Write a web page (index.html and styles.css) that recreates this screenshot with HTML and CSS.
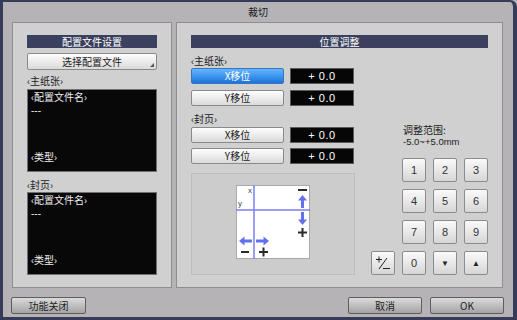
FILE: index.html
```html
<!DOCTYPE html>
<html lang="zh-CN">
<head>
    <meta charset="UTF-8">
    <title>裁切</title>
    <link rel="stylesheet" href="styles.css">
</head>
<body>
    <div class="window">
        <div class="titlebar">裁切</div>

        <div class="main">
            <!-- 配置文件设置 -->
            <section class="panel panel-profile">
                <div class="bar">配置文件设置</div>
                <button class="btn btn-select">选择配置文件</button>

                <div class="label">‹主纸张›</div>
                <div class="info-box">
                    <div class="info-name">‹配置文件名›</div>
                    <div class="info-dash">---</div>
                    <div class="info-type">‹类型›</div>
                </div>

                <div class="label label-low">‹封页›</div>
                <div class="info-box">
                    <div class="info-name">‹配置文件名›</div>
                    <div class="info-dash">---</div>
                    <div class="info-type">‹类型›</div>
                </div>
            </section>

            <!-- 位置调整 -->
            <section class="panel panel-adjust">
                <div class="bar">位置调整</div>
                <div class="adjust-body">
                    <div class="adjust-left">
                        <div class="label-a">‹主纸张›</div>
                        <div class="shift-row">
                            <button class="btn btn-shift active">X移位</button>
                            <div class="value">+ 0.0</div>
                        </div>
                        <div class="shift-row">
                            <button class="btn btn-shift">Y移位</button>
                            <div class="value">+ 0.0</div>
                        </div>

                        <div class="label-a label-a2">‹封页›</div>
                        <div class="shift-row shift-row-first">
                            <button class="btn btn-shift">X移位</button>
                            <div class="value">+ 0.0</div>
                        </div>
                        <div class="shift-row shift-row-tight">
                            <button class="btn btn-shift">Y移位</button>
                            <div class="value">+ 0.0</div>
                        </div>

                        <div class="diagram">
                            <svg width="74" height="74" viewBox="0 0 74 74">
                                <rect x="0.5" y="0.5" width="73" height="73" fill="#fff" stroke="#a9a9a9"/>
                                <line x1="18" y1="0" x2="18" y2="74" stroke="#7480f2" stroke-width="1.5"/>
                                <line x1="0" y1="25" x2="74" y2="25" stroke="#7480f2" stroke-width="1.5"/>
                                <text x="12" y="8" font-size="8" fill="#444" font-family="Liberation Sans, sans-serif">x</text>
                                <text x="2" y="21" font-size="8" fill="#444" font-family="Liberation Sans, sans-serif">y</text>
                                <!-- 右侧 -->
                                <rect x="62" y="4" width="9" height="2" fill="#2a2a2a"/>
                                <polygon points="66.5,10 71,15.5 62,15.5" fill="#6470f0"/>
                                <rect x="65" y="15" width="3" height="8" fill="#6470f0"/>
                                <rect x="65" y="27" width="3" height="8" fill="#6470f0"/>
                                <polygon points="62,34.5 71,34.5 66.5,40" fill="#6470f0"/>
                                <rect x="62" y="46.5" width="9" height="2" fill="#2a2a2a"/>
                                <rect x="65.5" y="43" width="2" height="9" fill="#2a2a2a"/>
                                <!-- 下侧 -->
                                <polygon points="3,56 8.5,51.5 8.5,60.5" fill="#6470f0"/>
                                <rect x="8" y="54.5" width="8" height="3" fill="#6470f0"/>
                                <rect x="20" y="54.5" width="8" height="3" fill="#6470f0"/>
                                <polygon points="27.5,51.5 27.5,60.5 33,56" fill="#6470f0"/>
                                <rect x="5" y="66" width="8" height="2" fill="#2a2a2a"/>
                                <rect x="23" y="66" width="9" height="2" fill="#2a2a2a"/>
                                <rect x="26.5" y="62.5" width="2" height="9" fill="#2a2a2a"/>
                            </svg>
                        </div>
                    </div>

                    <div class="adjust-right">
                        <div class="range">
                            <div class="range-title">调整范围:</div>
                            <div class="range-num">-5.0~+5.0mm</div>
                        </div>
                        <div class="keypad">
                            <button class="btn key key-start">1</button>
                            <button class="btn key">2</button>
                            <button class="btn key">3</button>
                            <button class="btn key key-start">4</button>
                            <button class="btn key">5</button>
                            <button class="btn key">6</button>
                            <button class="btn key key-start">7</button>
                            <button class="btn key">8</button>
                            <button class="btn key">9</button>
                            <button class="btn key key-sign">
                                <svg width="16" height="14" viewBox="0 0 16 14">
                                    <rect x="1" y="3" width="6" height="1" fill="#222"/>
                                    <rect x="3.5" y="0.5" width="1" height="6" fill="#222"/>
                                    <line x1="4" y1="13" x2="12" y2="2" stroke="#222" stroke-width="1"/>
                                    <rect x="8" y="12" width="7" height="1" fill="#222"/>
                                </svg>
                            </button>
                            <button class="btn key">0</button>
                            <button class="btn key key-arrow">▼</button>
                            <button class="btn key key-arrow">▲</button>
                        </div>
                    </div>
                </div>
            </section>
        </div>

        <div class="footer">
            <button class="btn btn-foot">功能关闭</button>
            <div class="footer-right">
                <button class="btn btn-foot">取消</button>
                <button class="btn btn-foot">OK</button>
            </div>
        </div>
    </div>
</body>
</html>
```

FILE: styles.css
```css
* {
    margin: 0;
    padding: 0;
    box-sizing: border-box;
}

body {
    font-family: "Noto Sans CJK SC", "Liberation Sans", sans-serif;
    font-size: 10px;
    color: #222;
    background: #b5b3b5;
    overflow: hidden;
}

.window {
    width: 517px;
    height: 320px;
    border: 3px solid #363b57;
    border-top-width: 2px;
    border-right-width: 4px;
    border-top-right-radius: 7px;
    background: #b5b3b5;
    display: flex;
    flex-direction: column;
}

.titlebar {
    height: 20px;
    line-height: 20px;
    text-align: center;
    color: #1a1a1a;
}

.main {
    height: 266px;
    display: flex;
    gap: 4px;
    padding: 0 9px;
}

.panel {
    border: 1px solid #8e8e8e;
    background: #d0d0d0;
    padding: 12px 14px 0;
}

.panel-profile {
    width: 160px;
}

.panel-adjust {
    width: 327px;
}

.bar {
    height: 13px;
    line-height: 13px;
    background: #3a405d;
    color: #fff;
    text-align: center;
}

.btn {
    font-family: inherit;
    font-size: 10px;
    color: #222;
    border: 1px solid #8a8a8a;
    border-radius: 2px;
    background: linear-gradient(#fdfdfd, #dadada);
    cursor: pointer;
}

.btn-select {
    display: block;
    width: 100%;
    height: 17px;
    margin-top: 5px;
    position: relative;
}

.btn-select::after {
    content: "";
    position: absolute;
    right: 2px;
    bottom: 2px;
    width: 0;
    height: 0;
    border-left: 4px solid transparent;
    border-bottom: 4px solid #555;
}

.label {
    height: 19px;
    padding-top: 4px;
    line-height: 14px;
    color: #222;
}

.label-low {
    height: 20px;
    padding-top: 6px;
}

.info-box {
    height: 83px;
    background: #080808;
    border: 1px solid #707070;
    color: #eee;
    padding: 0 3px 7px;
    line-height: 15px;
    display: flex;
    flex-direction: column;
}

.info-name {
    line-height: 14px;
}

.info-dash {
    font-family: "Liberation Sans", sans-serif;
    line-height: 13px;
}

.info-type {
    margin-top: auto;
}

.adjust-body {
    display: flex;
}

.adjust-left {
    width: 164px;
    flex: none;
    display: flex;
    flex-direction: column;
}

.label-a {
    height: 20px;
    padding-top: 6px;
    line-height: 14px;
}

.label-a2 {
    height: 21px;
}

.shift-row {
    display: flex;
    gap: 6px;
    height: 16px;
}

.shift-row + .shift-row {
    margin-top: 6px;
}

.shift-row-tight {
    margin-top: 5px !important;
}

.btn-shift {
    width: 93px;
    height: 16px;
    line-height: 14px;
}

.btn-shift.active {
    background: linear-gradient(#64b6ff, #1a74de);
    border-color: #3b74b8;
    color: #fff;
}

.value {
    width: 64px;
    height: 16px;
    background: #060606;
    border: 1px solid #5a5a5a;
    color: #fff;
    text-align: center;
    line-height: 14px;
    font-family: "Liberation Sans", sans-serif;
    font-size: 11px;
    letter-spacing: 0.5px;
}

.diagram {
    margin-top: 9px;
    height: 102px;
    border: 1px solid #bdbdbd;
    background: #cccccc;
    display: flex;
    justify-content: center;
    padding-top: 11px;
}

.adjust-right {
    flex: 1;
    display: flex;
    flex-direction: column;
    justify-content: flex-end;
    padding-bottom: 0;
}

.range {
    padding-left: 48px;
    margin-bottom: 11px;
    color: #222;
}

.range-title {
    line-height: 13px;
}

.range-num {
    font-family: "Liberation Sans", sans-serif;
    font-size: 9.5px;
    line-height: 11px;
}

.keypad {
    margin-left: 16px;
    display: grid;
    grid-template-columns: repeat(4, 24px);
    grid-auto-rows: 24px;
    gap: 7px;
}

.key {
    font-family: "Liberation Sans", sans-serif;
    font-size: 11px;
    color: #333;
    border-color: #8c8c8c;
    background: linear-gradient(#fafafa, #d6d6d6);
    display: flex;
    align-items: center;
    justify-content: center;
}

.key-start {
    grid-column-start: 2;
}

.key-arrow {
    font-size: 8px;
    color: #222;
}

.footer {
    height: 29px;
    display: flex;
    justify-content: space-between;
    padding: 9px 9px 0 8px;
}

.footer-right {
    display: flex;
    gap: 8px;
}

.btn-foot {
    width: 75px;
    height: 17px;
    line-height: 15px;
    border-color: #5e5e5e;
    background: linear-gradient(#dadada, #a4a4a4);
    color: #222;
}

.footer-right .btn-foot {
    width: 74px;
}
```
